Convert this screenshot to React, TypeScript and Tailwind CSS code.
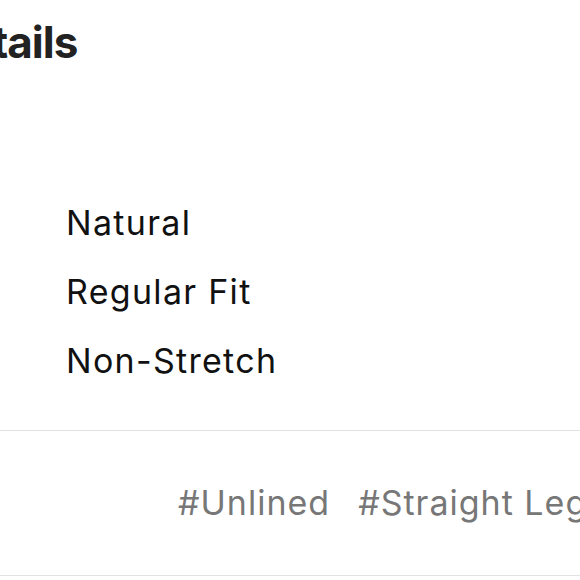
import React from "react";

export default function App() {
  return (
    <div
      className="w-[580px] h-[580px] overflow-hidden bg-white"
      style={{ fontFamily: "Inter, 'Noto Sans', sans-serif" }}
    >
      <div className="pt-[19px] ml-[-64px] whitespace-nowrap text-[44px] leading-[46px] tracking-[-1px] font-bold text-[#222222]">
        Details
      </div>
      <div className="mt-[123px] pl-[66px] flex flex-col text-[34px] leading-[69px] tracking-[1.3px] text-[#111111]">
        <div>Natural</div>
        <div>Regular Fit</div>
        <div>Non-Stretch</div>
      </div>
      <div className="mt-[35px] border-t border-[#e2e2e2]" />
      <div className="pt-[37px] pb-[38px] pl-[178px] flex gap-[28px] whitespace-nowrap text-[34px] leading-[69px] tracking-[1px] text-[#777777]">
        <span>#Unlined</span>
        <span>#Straight Leg</span>
      </div>
      <div className="border-t border-[#e2e2e2]" />
    </div>
  );
}
